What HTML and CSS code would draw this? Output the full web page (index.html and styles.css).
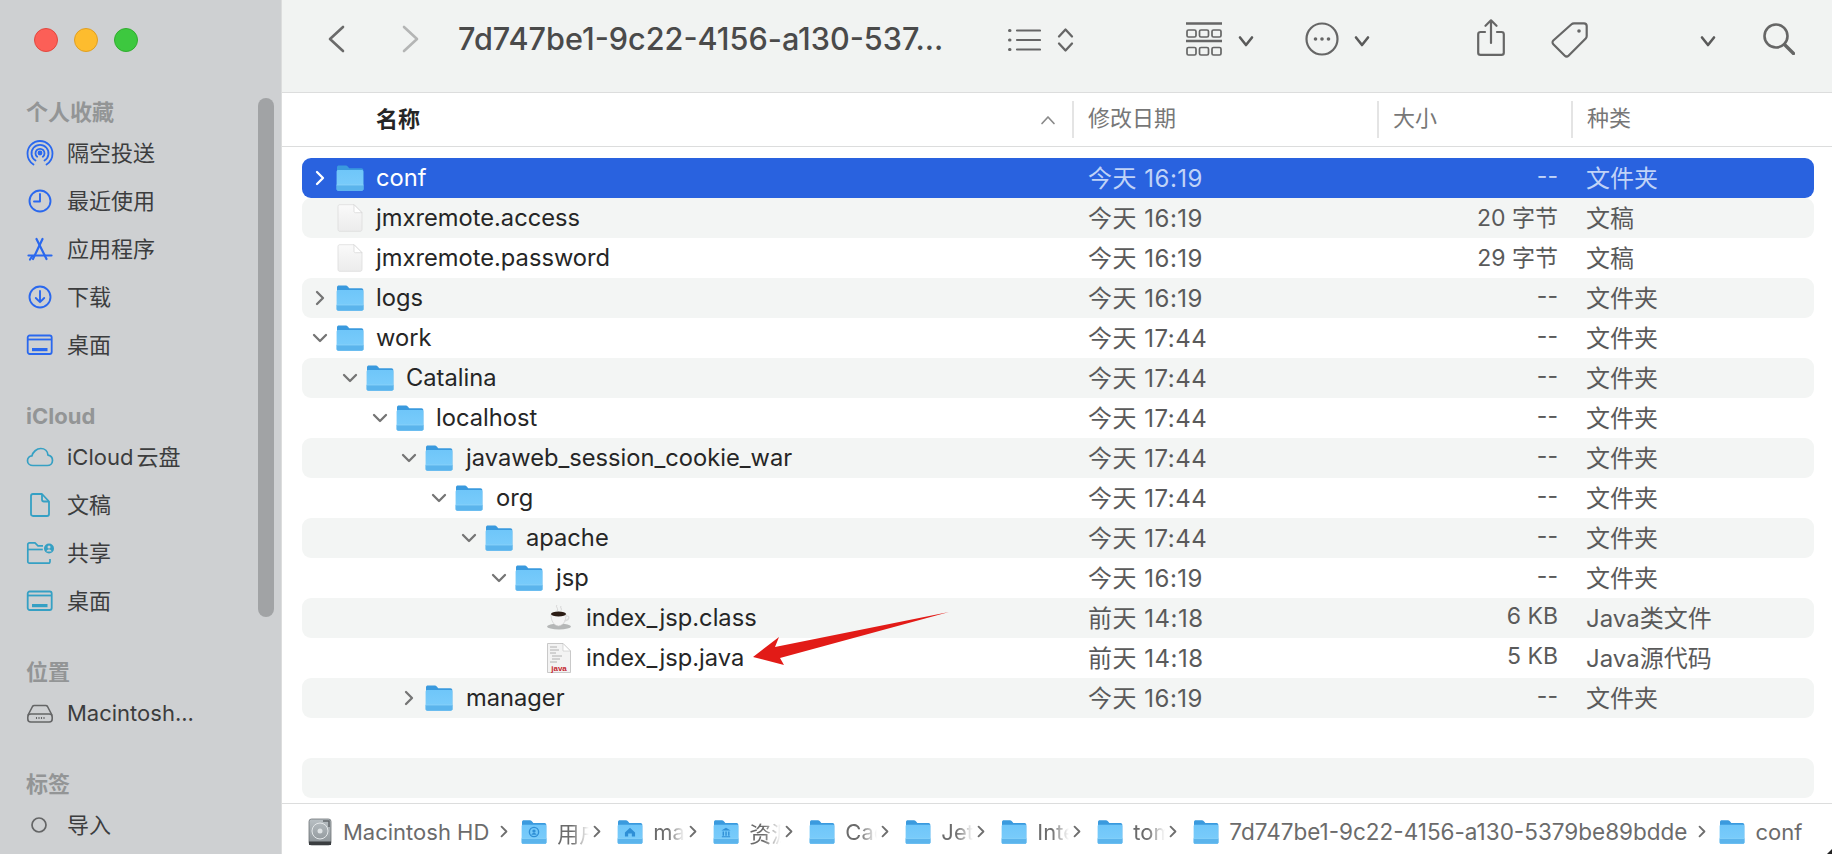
FILE: index.html
```html
<!DOCTYPE html>
<html lang="zh-CN">
<head>
    <meta charset="UTF-8">
    <title>conf</title>
    <link rel="stylesheet" href="styles.css">
</head>
<body>
    <svg class="defs" width="0" height="0">
        <defs>
            <linearGradient id="folderBody" x1="0" y1="0" x2="0" y2="1">
                <stop offset="0" stop-color="#6fc6f9"/>
                <stop offset="1" stop-color="#7ccdfb"/>
            </linearGradient>
            <linearGradient id="fileBody" x1="0" y1="0" x2="0" y2="1">
                <stop offset="0" stop-color="#fafafa"/>
                <stop offset="1" stop-color="#ececec"/>
            </linearGradient>
            <linearGradient id="diskBody" x1="0" y1="0" x2="0" y2="1">
                <stop offset="0" stop-color="#b9c0c4"/>
                <stop offset="1" stop-color="#8b9296"/>
            </linearGradient>
            <symbol id="folder" viewBox="0 0 28 26">
                <path d="M1 25V2.2C1 1 1.8.4 3 .4h6.5c1 0 1.6.3 2.2 1l1.6 1.8H25.500c1 0 1.8.8 1.800 1.800V25z" fill="#3a9ade"/>
                <path d="M.6 6.600c0-.9.700-1.500 1.500-1.500h23.800c.8 0 1.500.6 1.500 1.500v17.400c0 1-.7 1.700-1.700 1.700H2.300c-1 0-1.700-.7-1.700-1.700z" fill="url(#folderBody)"/>
                <path d="M.6 20h26.800v4c0 1-.7 1.700-1.700 1.700H2.300c-1 0-1.700-.7-1.700-1.700z" fill="#5bb4ec"/>
                <path d="M.6 20h26.800" stroke="#8fd6fb" stroke-width=".7"/>
            </symbol>
            <symbol id="file" viewBox="0 0 26 28">
                <path d="M1 2.500C1 1.400 1.700.7 2.800.7h14.200L25 8.700v16.800c0 1-.7 1.800-1.800 1.800H2.800c-1.100 0-1.800-.8-1.800-1.800z" fill="url(#fileBody)" stroke="#dcdcdc" stroke-width=".8"/>
                <path d="M17 .7v6.500c0 1 .6 1.500 1.500 1.500H25z" fill="#fff" stroke="#d4d4d4" stroke-width=".7"/>
            </symbol>
            <symbol id="chevron-r" viewBox="0 0 12 16">
                <path d="M3 2l6 6-6 6" fill="none" stroke="currentColor" stroke-width="2.300" stroke-linecap="round" stroke-linejoin="round"/>
            </symbol>
            <symbol id="chevron-d" viewBox="0 0 16 12">
                <path d="M2 3l6 6 6-6" fill="none" stroke="currentColor" stroke-width="2.300" stroke-linecap="round" stroke-linejoin="round"/>
            </symbol>
        </defs>
    </svg>

    <div class="window">
        <aside class="sidebar">
            <div class="lights">
                <span class="light red"></span>
                <span class="light yellow"></span>
                <span class="light green"></span>
            </div>

            <h3 class="side-title first">个人收藏</h3>
            <div class="side-item blue">
                <svg class="side-icon" viewBox="0 0 28 28" fill="none" stroke="currentColor" stroke-width="1.800" stroke-linecap="round">
                    <path d="M7.500 25.500C3.500 23 1.500 18.900 1.500 14.500a12.500 12.500 0 0 1 25 0c0 4.400-2 8.500-6 11"/>
                    <path d="M9.500 21.500a8.500 8.500 0 1 1 9 0"/>
                    <path d="M11.200 17.800a4.500 4.500 0 1 1 5.600 0"/>
                    <circle cx="14" cy="14" r="1.500" fill="currentColor"/>
                </svg>
                <span class="cjk">隔空投送</span>
            </div>
            <div class="side-item blue">
                <svg class="side-icon" viewBox="0 0 28 28" fill="none" stroke="currentColor" stroke-width="1.900" stroke-linecap="round" stroke-linejoin="round">
                    <circle cx="14" cy="14" r="10.500"/>
                    <path d="M14 7v7.500H8"/>
                </svg>
                <span class="cjk">最近使用</span>
            </div>
            <div class="side-item blue">
                <svg class="side-icon" viewBox="0 0 28 28" fill="none" stroke="currentColor" stroke-width="2.200" stroke-linecap="round">
                    <path d="M10.500 4l10 20"/>
                    <path d="M16.500 4l-9.500 20"/>
                    <path d="M2.500 20.500h23"/>
                    <path d="M4 24.500l2-3"/>
                </svg>
                <span class="cjk">应用程序</span>
            </div>
            <div class="side-item blue">
                <svg class="side-icon" viewBox="0 0 28 28" fill="none" stroke="currentColor" stroke-width="1.900" stroke-linecap="round" stroke-linejoin="round">
                    <circle cx="14" cy="14" r="10.500"/>
                    <path d="M14 8v11M9.800 15l4.200 4.200 4.200-4.200"/>
                </svg>
                <span class="cjk">下载</span>
            </div>
            <div class="side-item blue">
                <svg class="side-icon" viewBox="0 0 28 28" fill="none" stroke="currentColor" stroke-width="1.800">
                    <rect x="1.700" y="4.500" width="24" height="18.500" rx="2"/>
                    <path d="M1.700 8.500h24"/>
                    <rect x="6" y="17" width="15.500" height="3.200" fill="currentColor" stroke="none"/>
                </svg>
                <span class="cjk">桌面</span>
            </div>

            <h3 class="side-title">iCloud</h3>
            <div class="side-item teal">
                <svg class="side-icon" viewBox="0 0 28 28" fill="none" stroke="currentColor" stroke-width="1.700" stroke-linejoin="round">
                    <path d="M7 22.500c-3 0-5.500-1.900-5.500-4.800 0-2.600 2-4.600 4.400-4.800C7 9 10.500 5.500 14.800 5.500c4 0 6.900 2.900 7.200 6.700 2.600.5 4.500 2.600 4.500 5.200 0 2.900-2.300 5.100-5.200 5.100z"/>
                </svg>
                <span class="cjk tight">iCloud 云盘</span>
            </div>
            <div class="side-item teal">
                <svg class="side-icon" viewBox="0 0 28 28" fill="none" stroke="currentColor" stroke-width="1.800" stroke-linejoin="round">
                    <path d="M5 5c0-1.200.8-2 2-2h9l7 7.500V23c0 1.200-.8 2-2 2H7c-1.200 0-2-.8-2-2z"/>
                    <path d="M16 3v5.500c0 1.200.8 2 2 2h5"/>
                </svg>
                <span class="cjk">文稿</span>
            </div>
            <div class="side-item teal">
                <svg class="side-icon" viewBox="0 0 28 28" fill="none" stroke="currentColor" stroke-width="1.700" stroke-linejoin="round">
                    <path d="M24 20v2.500c0 1-.7 1.700-1.700 1.700H3.500c-1 0-1.700-.7-1.700-1.700V5.500c0-1 .7-1.700 1.700-1.700h5.500l3 3h5"/>
                    <path d="M1.800 10.500h15"/>
                    <circle cx="23" cy="9.500" r="5" fill="currentColor" stroke="none"/>
                    <circle cx="23" cy="8" r="1.500" fill="#ced0d2" stroke="none"/>
                    <path d="M20.500 12.500c.4-1.400 1.300-2 2.500-2s2.100.6 2.500 2z" fill="#ced0d2" stroke="none"/>
                </svg>
                <span class="cjk">共享</span>
            </div>
            <div class="side-item teal">
                <svg class="side-icon" viewBox="0 0 28 28" fill="none" stroke="currentColor" stroke-width="1.800">
                    <rect x="1.700" y="4.500" width="24" height="18.500" rx="2"/>
                    <path d="M1.700 8.500h24"/>
                    <rect x="6" y="17" width="15.500" height="3.200" fill="currentColor" stroke="none"/>
                </svg>
                <span class="cjk">桌面</span>
            </div>

            <h3 class="side-title">位置</h3>
            <div class="side-item gray">
                <svg class="side-icon" viewBox="0 0 28 28" fill="none" stroke="currentColor" stroke-width="1.600" stroke-linejoin="round">
                    <path d="M1.800 16.500L6.500 7.500c.4-.7 1-1 1.800-1h11.400c.8 0 1.400.3 1.800 1l4.700 9"/>
                    <rect x="1.800" y="15" width="24.400" height="8" rx="3"/>
                    <path d="M10.500 18v2M13 18v2M15.500 18v2M18 18v2" stroke-width="1.100"/>
                </svg>
                <span>Macintosh...</span>
            </div>

            <h3 class="side-title">标签</h3>
            <div class="side-item gray">
                <svg class="side-icon" viewBox="0 0 28 28" fill="none" stroke="currentColor" stroke-width="1.700">
                    <circle cx="13" cy="14" r="7"/>
                </svg>
                <span class="cjk">导入</span>
            </div>

            <div class="scroll-thumb"></div>
        </aside>

        <main class="main">
            <header class="toolbar">
                <svg class="tb-back" viewBox="0 0 18 28" fill="none" stroke="#6a6a6a" stroke-width="2.600" stroke-linecap="round" stroke-linejoin="round"><path d="M16 2L3 14l13 12"/></svg>
                <svg class="tb-forward" viewBox="0 0 18 28" fill="none" stroke="#b4b5b5" stroke-width="2.600" stroke-linecap="round" stroke-linejoin="round"><path d="M2 2l13 12L2 26"/></svg>
                <div class="tb-title">7d747be1-9c22-4156-a130-537...</div>

                <svg class="tb-list" viewBox="0 0 33 24" fill="none" stroke="#666" stroke-width="2.200" stroke-linecap="round">
                    <path d="M9 2.500h23M9 12h23M9 21.500h23"/>
                    <path d="M1.500 2.500h.5M1.500 12h.5M1.500 21.500h.5" stroke-width="3"/>
                </svg>
                <svg class="tb-updown" viewBox="0 0 17 26" fill="none" stroke="#666" stroke-width="2.300" stroke-linecap="round" stroke-linejoin="round">
                    <path d="M2 9.500l6.500-7 6.500 7M2 16.500l6.500 7 6.500-7"/>
                </svg>

                <svg class="tb-gallery" viewBox="0 0 36 34" fill="none" stroke="#666" stroke-width="1.700">
                    <path d="M0 1.500h36M0 19h36" stroke-width="2.400"/>
                    <rect x="1" y="8" width="9" height="7" rx="1.500"/>
                    <rect x="13.500" y="8" width="9" height="7" rx="1.500"/>
                    <rect x="26" y="8" width="9" height="7" rx="1.500"/>
                    <rect x="1" y="25.500" width="9" height="7.500" rx="1.500"/>
                    <rect x="13.500" y="25.500" width="9" height="7.500" rx="1.500"/>
                    <rect x="26" y="25.500" width="9" height="7.500" rx="1.500"/>
                </svg>
                <svg class="tb-caret caret-view" viewBox="0 0 16 12" fill="none" stroke="#5a5a5a" stroke-width="2.600" stroke-linecap="round" stroke-linejoin="round"><path d="M2 2.500L8 10l6-7.500"/></svg>

                <svg class="tb-more" viewBox="0 0 34 34" fill="none" stroke="#666" stroke-width="2.200">
                    <circle cx="17" cy="17" r="15.500"/>
                    <g fill="#666" stroke="none">
                        <circle cx="10.500" cy="17" r="1.800"/><circle cx="17" cy="17" r="1.800"/><circle cx="23.500" cy="17" r="1.800"/>
                    </g>
                </svg>
                <svg class="tb-caret caret-more" viewBox="0 0 16 12" fill="none" stroke="#5a5a5a" stroke-width="2.600" stroke-linecap="round" stroke-linejoin="round"><path d="M2 2.500L8 10l6-7.500"/></svg>

                <svg class="tb-share" viewBox="0 0 28 37" fill="none" stroke="#666" stroke-width="2.200" stroke-linecap="round" stroke-linejoin="round">
                    <path d="M8 13H3.500c-1.400 0-2.300.9-2.300 2.300v18.400c0 1.400.9 2.200 2.300 2.200h21c1.400 0 2.300-.8 2.300-2.200V15.300c0-1.400-.9-2.300-2.300-2.300H20"/>
                    <path d="M14 24V1.500M8.500 6.800L14 1.300l5.500 5.500"/>
                </svg>
                <svg class="tb-tag" viewBox="0 0 37 36" fill="none" stroke="#666" stroke-width="2.200" stroke-linejoin="round">
                    <path d="M23 1.300h10c1.500 0 2.700 1.200 2.700 2.700v10c0 1-.3 1.800-1 2.500L17.500 33.700c-1 1-2.700 1-3.700 0L2.300 22.200c-1-1-1-2.700 0-3.700L20.500 2.300c.7-.7 1.500-1 2.500-1z"/>
                    <circle cx="28" cy="9" r="1.800" fill="#666" stroke="none"/>
                </svg>
                <svg class="tb-caret caret-overflow" viewBox="0 0 16 12" fill="none" stroke="#5a5a5a" stroke-width="2.600" stroke-linecap="round" stroke-linejoin="round"><path d="M2 2.500L8 10l6-7.500"/></svg>
                <svg class="tb-search" viewBox="0 0 32 32" fill="none" stroke="#666" stroke-width="2.600" stroke-linecap="round">
                    <circle cx="13" cy="13" r="11.500"/>
                    <path d="M21.500 21.500l9 9" stroke-width="3.400"/>
                </svg>
            </header>

            <div class="col-head">
                <div class="head-name">
                    <span>名称</span>
                    <svg class="sort-caret" viewBox="0 0 16 10" fill="none" stroke="#8a8a8a" stroke-width="1.700" stroke-linecap="round" stroke-linejoin="round"><path d="M2 8.500L8 2l6 6.500"/></svg>
                </div>
                <div class="head-cell head-date">修改日期</div>
                <div class="head-cell head-size">大小</div>
                <div class="head-cell head-kind">种类</div>
            </div>

            <div class="list">
                <div class="row selected">
                    <div class="name d0"><svg class="arrow right"><use href="#chevron-r"/></svg><svg class="ficon"><use href="#folder"/></svg><span>conf</span></div>
                    <div class="date">今天 16:19</div><div class="size">--</div><div class="kind">文件夹</div>
                </div>
                <div class="row stripe">
                    <div class="name d0"><span class="arrow"></span><svg class="ficon doc"><use href="#file"/></svg><span>jmxremote.access</span></div>
                    <div class="date">今天 16:19</div><div class="size">20 字节</div><div class="kind">文稿</div>
                </div>
                <div class="row">
                    <div class="name d0"><span class="arrow"></span><svg class="ficon doc"><use href="#file"/></svg><span>jmxremote.password</span></div>
                    <div class="date">今天 16:19</div><div class="size">29 字节</div><div class="kind">文稿</div>
                </div>
                <div class="row stripe">
                    <div class="name d0"><svg class="arrow right"><use href="#chevron-r"/></svg><svg class="ficon"><use href="#folder"/></svg><span>logs</span></div>
                    <div class="date">今天 16:19</div><div class="size">--</div><div class="kind">文件夹</div>
                </div>
                <div class="row">
                    <div class="name d0"><svg class="arrow down"><use href="#chevron-d"/></svg><svg class="ficon"><use href="#folder"/></svg><span>work</span></div>
                    <div class="date">今天 17:44</div><div class="size">--</div><div class="kind">文件夹</div>
                </div>
                <div class="row stripe">
                    <div class="name d1"><svg class="arrow down"><use href="#chevron-d"/></svg><svg class="ficon"><use href="#folder"/></svg><span>Catalina</span></div>
                    <div class="date">今天 17:44</div><div class="size">--</div><div class="kind">文件夹</div>
                </div>
                <div class="row">
                    <div class="name d2"><svg class="arrow down"><use href="#chevron-d"/></svg><svg class="ficon"><use href="#folder"/></svg><span>localhost</span></div>
                    <div class="date">今天 17:44</div><div class="size">--</div><div class="kind">文件夹</div>
                </div>
                <div class="row stripe">
                    <div class="name d3"><svg class="arrow down"><use href="#chevron-d"/></svg><svg class="ficon"><use href="#folder"/></svg><span>javaweb_session_cookie_war</span></div>
                    <div class="date">今天 17:44</div><div class="size">--</div><div class="kind">文件夹</div>
                </div>
                <div class="row">
                    <div class="name d4"><svg class="arrow down"><use href="#chevron-d"/></svg><svg class="ficon"><use href="#folder"/></svg><span>org</span></div>
                    <div class="date">今天 17:44</div><div class="size">--</div><div class="kind">文件夹</div>
                </div>
                <div class="row stripe">
                    <div class="name d5"><svg class="arrow down"><use href="#chevron-d"/></svg><svg class="ficon"><use href="#folder"/></svg><span>apache</span></div>
                    <div class="date">今天 17:44</div><div class="size">--</div><div class="kind">文件夹</div>
                </div>
                <div class="row">
                    <div class="name d6"><svg class="arrow down"><use href="#chevron-d"/></svg><svg class="ficon"><use href="#folder"/></svg><span>jsp</span></div>
                    <div class="date">今天 16:19</div><div class="size">--</div><div class="kind">文件夹</div>
                </div>
                <div class="row stripe">
                    <div class="name d7"><span class="arrow"></span>
                        <svg class="ficon doc" viewBox="0 0 26 28">
                            <ellipse cx="13" cy="22.500" rx="12" ry="3" fill="#b5b7b7"/>
                            <path d="M5 10h15c0 6-1.500 11-7.500 12C7 21.500 5 16 5 10z" fill="#f4f4f4" stroke="#c8c8c8" stroke-width=".6"/>
                            <path d="M20 12c3.500-.8 4.500 3.500-1.500 5" fill="none" stroke="#dcdcdc" stroke-width="1.400"/>
                            <ellipse cx="12.500" cy="10" rx="7.500" ry="2.600" fill="#2b1c14"/>
                            <path d="M11 1c-2 2 2 3 0 6M15 2c-1.500 1.500 1.500 2.500 0 4.500" fill="none" stroke="#d6d6d6" stroke-width="1"/>
                        </svg>
                        <span>index_jsp.class</span></div>
                    <div class="date">前天 14:18</div><div class="size">6 KB</div><div class="kind">Java类文件</div>
                </div>
                <div class="row">
                    <div class="name d7"><span class="arrow"></span>
                        <svg class="ficon java" viewBox="0 0 26 32">
                            <path d="M1.500 1.500h15.500l7.500 7.500v21.500H1.500z" fill="#f3f3f3" stroke="#bcbcbc" stroke-width=".8"/>
                            <path d="M17 1.500v7.500h7.500z" fill="#fff" stroke="#c4c4c4" stroke-width=".6"/>
                            <path d="M4 5h7M4 8h9M4 11h6M6 14h10M6 17h8M4 20h7" stroke="#b0b0b0" stroke-width="1"/>
                            <text x="13" y="28.500" class="java-label">java</text>
                        </svg>
                        <span>index_jsp.java</span></div>
                    <div class="date">前天 14:18</div><div class="size">5 KB</div><div class="kind">Java源代码</div>
                </div>
                <div class="row stripe">
                    <div class="name d3"><svg class="arrow right"><use href="#chevron-r"/></svg><svg class="ficon"><use href="#folder"/></svg><span>manager</span></div>
                    <div class="date">今天 16:19</div><div class="size">--</div><div class="kind">文件夹</div>
                </div>
                <div class="row"></div>
                <div class="row stripe"></div>

                <!-- red annotation arrow drawn over the list -->
                <svg class="annotation" viewBox="0 0 200 60">
                    <path d="M196 0L22 35L26 25L0 45L31 53L27 46z" fill="#e21b17"/>
                </svg>
            </div>

            <footer class="pathbar">
                <svg class="hd" viewBox="0 0 24 28">
                    <rect x="1" y="1" width="22" height="26" rx="2.500" fill="url(#diskBody)" stroke="#6f7477" stroke-width=".8"/>
                    <rect x="1" y="23.500" width="22" height="3.500" fill="#3a3d40"/>
                    <circle cx="12" cy="13" r="8" fill="none" stroke="#e4e8ea" stroke-width="1"/>
                    <circle cx="12" cy="13" r="2.500" fill="#dfe3e5"/>
                    <path d="M15 3h6v6" fill="none" stroke="#60666a" stroke-width="1.500"/>
                </svg>
                <span class="crumb-text">Macintosh HD</span>
                <svg class="crumb-sep wide"><use href="#chevron-r"/></svg>

                <span class="crumb">
                    <svg class="cicon" viewBox="0 0 28 26">
                        <use href="#folder"/>
                        <circle cx="14" cy="13" r="5" fill="none" stroke="#2f8fd6" stroke-width="1.500"/>
                        <circle cx="14" cy="12" r="1.800" fill="#2f8fd6"/>
                        <path d="M11 16c.6-1.500 1.600-2 3-2s2.400.5 3 2z" fill="#2f8fd6"/>
                    </svg>
                    <span class="crumb-text cut">用户</span>
                </span>
                <svg class="crumb-sep"><use href="#chevron-r"/></svg>
                <span class="crumb">
                    <svg class="cicon" viewBox="0 0 28 26">
                        <use href="#folder"/>
                        <path d="M8.500 13.500L14 8.500l5.500 5v4.500h-3.500v-3.500h-4V18H8.500z" fill="#2f8fd6"/>
                    </svg>
                    <span class="crumb-text cut">macbook</span>
                </span>
                <svg class="crumb-sep"><use href="#chevron-r"/></svg>
                <span class="crumb">
                    <svg class="cicon" viewBox="0 0 28 26">
                        <use href="#folder"/>
                        <path d="M9 11.500L14 8.500l5 3zM9.500 17.500h9v1.200h-9zM10.300 12.500h1.500v4.500h-1.500zM13.300 12.500h1.500v4.500h-1.500zM16.300 12.500h1.500v4.500h-1.500z" fill="#2f8fd6"/>
                    </svg>
                    <span class="crumb-text cut">资源库</span>
                </span>
                <svg class="crumb-sep"><use href="#chevron-r"/></svg>
                <span class="crumb">
                    <svg class="cicon"><use href="#folder"/></svg>
                    <span class="crumb-text cut">Caches</span>
                </span>
                <svg class="crumb-sep"><use href="#chevron-r"/></svg>
                <span class="crumb">
                    <svg class="cicon"><use href="#folder"/></svg>
                    <span class="crumb-text cut">JetBrains</span>
                </span>
                <svg class="crumb-sep"><use href="#chevron-r"/></svg>
                <span class="crumb">
                    <svg class="cicon"><use href="#folder"/></svg>
                    <span class="crumb-text cut">IntelliJIdea</span>
                </span>
                <svg class="crumb-sep"><use href="#chevron-r"/></svg>
                <span class="crumb">
                    <svg class="cicon"><use href="#folder"/></svg>
                    <span class="crumb-text cut">tomcat</span>
                </span>
                <svg class="crumb-sep"><use href="#chevron-r"/></svg>
                <span class="crumb">
                    <svg class="cicon"><use href="#folder"/></svg>
                    <span class="crumb-text long">7d747be1-9c22-4156-a130-5379be89bdde</span>
                </span>
                <svg class="crumb-sep wide"><use href="#chevron-r"/></svg>
                <span class="crumb">
                    <svg class="cicon"><use href="#folder"/></svg>
                    <span class="crumb-text">conf</span>
                </span>
            </footer>
        </main>
    </div>
    <div class="corner-mark"></div>
</body>
</html>
```

FILE: styles.css
```css
* {
    box-sizing: border-box;
}

html, body {
    margin: 0;
    height: 100%;
    overflow: hidden;
}

body {
    font-family: Inter, "Noto Sans CJK SC", sans-serif;
    color: #2a2a2a;
    background: #fff;
}

.defs {
    position: absolute;
}

.window {
    display: flex;
    height: 854px;
}

/* sidebar */
.sidebar {
    position: relative;
    width: 282px;
    flex: none;
    padding: 28px 0 0 26px;
    background: #ced0d2;
    border-right: 1px solid #dcdddd;
}

.lights {
    display: flex;
    gap: 16px;
    margin-left: 8px;
    height: 24px;
}

.light {
    width: 24px;
    height: 24px;
    border-radius: 50%;
}
.red { background: #fc5f57; border: 1px solid #e2483f; }
.yellow { background: #fdbc2e; border: 1px solid #e09f22; }
.green { background: #3dc83f; border: 1px solid #31ad2f; }

.side-title {
    margin: 30px 0 0;
    height: 34px;
    line-height: 34px;
    font-size: 22px;
    font-weight: 700;
    color: #939596;
}
.side-title.first {
    margin-top: 43px;
}

.side-item {
    display: flex;
    align-items: center;
    height: 48px;
    gap: 13px;
    font-size: 22px;
    color: #3c3d3e;
}
.side-icon {
    width: 28px;
    height: 28px;
    flex: none;
}
.cjk { padding-bottom: 4px; }
.tight { word-spacing: -3px; }
.blue .side-icon { color: #2a68ee; }
.teal .side-icon { color: #35a0c4; }
.gray .side-icon { color: #646566; }

.scroll-thumb {
    position: absolute;
    left: 258px;
    top: 98px;
    width: 16px;
    height: 519px;
    border-radius: 8px;
    background: #a1a3a5;
}

/* main area */
.main {
    flex: 1;
    min-width: 0;
    display: flex;
    flex-direction: column;
}

.toolbar {
    position: relative;
    height: 93px;
    flex: none;
    background: #f1f3f2;
    border-bottom: 1px solid #dcdddd;
}

.toolbar svg {
    position: absolute;
}

/* toolbar icon offsets are relative to the toolbar, x minus the 282px sidebar */
.tb-back { left: 45px; top: 25px; width: 18px; height: 28px; }
.tb-forward { left: 120px; top: 25px; width: 18px; height: 28px; }
.tb-list { left: 726px; top: 28px; width: 33px; height: 24px; }
.tb-updown { left: 775px; top: 27px; width: 17px; height: 26px; }
.tb-gallery { left: 904px; top: 22px; width: 36px; height: 34px; }
.tb-more { left: 1023px; top: 22px; width: 34px; height: 34px; }
.tb-share { left: 1195px; top: 19px; width: 28px; height: 37px; }
.tb-tag { left: 1269px; top: 22px; width: 37px; height: 36px; }
.tb-search { left: 1481px; top: 23px; width: 32px; height: 32px; }
.tb-caret { top: 35px; width: 16px; height: 12px; }
.caret-view { left: 956px; }
.caret-more { left: 1072px; }
.caret-overflow { left: 1418px; }

.tb-title {
    position: absolute;
    left: 176px;
    top: 21px;
    font-size: 30.600px;
    line-height: 36px;
    font-weight: 500;
    color: #4a4a4a;
}

.col-head {
    display: flex;
    height: 54px;
    flex: none;
    align-items: center;
    border-bottom: 1px solid #dcdddd;
    font-size: 22px;
}

.head-name {
    width: 790px;
    padding: 0 0 6px 94px;
    display: flex;
    align-items: center;
    justify-content: space-between;
    font-weight: 600;
    color: #262626;
}

.sort-caret {
    width: 16px;
    height: 10px;
    margin: 6px 16px 0 0;
}

.head-cell {
    height: 37px;
    line-height: 35px;
    border-left: 2px solid #e4e4e4;
    padding-left: 14px;
    color: #777;
}
.head-date { width: 305px; }
.head-size { width: 194px; }
.head-kind { flex: 1; }

.list {
    position: relative;
    flex: 1;
    padding: 11px 18px 0 20px;
    border-bottom: 1px solid #dcdddd;
}

.row {
    display: grid;
    grid-template-columns: 786px 240px 232px 1fr;
    align-items: center;
    height: 40px;
    font-size: 23.700px;
    border-radius: 9px;
    color: #262626;
}
.stripe { background: #f3f5f4; }
.selected { background: #2962df; color: #fff; }

.name {
    display: flex;
    align-items: center;
    height: 40px;
    padding-bottom: 1px;
}
.d0 { padding-left: 6px; }
.d1 { padding-left: 36px; }
.d2 { padding-left: 66px; }
.d3 { padding-left: 95px; }
.d4 { padding-left: 125px; }
.d5 { padding-left: 155px; }
.d6 { padding-left: 185px; }
.d7 { padding-left: 215px; }
.d3 > span:last-child,
.d4 > span:last-child,
.d5 > span:last-child,
.d6 > span:last-child,
.d7 > span:last-child {
    margin-left: 1px;
}

.arrow {
    flex: none;
    display: block;
    width: 24px;
    height: 40px;
    color: #757575;
}
.arrow.right { padding: 12px 6px; }
.arrow.down { padding: 14px 4px; }
.selected .arrow { color: #fff; }

.ficon {
    flex: none;
    width: 28px;
    height: 26px;
    margin-left: 4px;
    margin-right: 12px;
}
.ficon.doc { height: 28px; }
.ficon.java { height: 32px; }

.java-label {
    font-family: "Liberation Sans", sans-serif;
    font-size: 8px;
    font-weight: 700;
    fill: #c4262e;
    text-anchor: middle;
}

.date, .size, .kind {
    padding-bottom: 4px;
    font-size: 24px;
    color: #5a5a5a;
}
.date {
    letter-spacing: .5px;
}
.size {
    text-align: right;
    font-size: 23px;
    padding-right: 2px;
}
.kind {
    padding-left: 26px;
}
.selected .date, .selected .size, .selected .kind {
    color: #c0d3f7;
}

.annotation {
    position: absolute;
    left: 471px;
    top: 465px;
    width: 200px;
    height: 60px;
}

.pathbar {
    display: flex;
    align-items: center;
    height: 50px;
    flex: none;
    padding: 5px 0 0 26px;
    font-size: 22px;
    color: #6b6b6b;
}

.hd {
    width: 24px;
    height: 28px;
    flex: none;
    margin-right: 11px;
}

.crumb {
    display: flex;
    align-items: center;
    gap: 10px;
}

.cicon {
    width: 26px;
    height: 24px;
    flex: none;
}

.crumb-text {
    white-space: nowrap;
}
.crumb-text.long {
    font-size: 22.500px;
}
.crumb-text.cut {
    display: block;
    width: 32px;
    overflow: hidden;
    -webkit-mask-image: linear-gradient(to right, #000 45%, transparent 100%);
    mask-image: linear-gradient(to right, #000 45%, transparent 100%);
}

.crumb-sep {
    flex: none;
    width: 12px;
    height: 13px;
    margin: 0 14px 0 2px;
    color: #6e6e6e;
}
.crumb-sep.wide {
    margin: 0 11px 0 9px;
}

.corner-mark {
    position: absolute;
    right: 0;
    bottom: 0;
    width: 0;
    height: 0;
    border-left: 5px solid transparent;
    border-bottom: 5px solid #222;
}
```
